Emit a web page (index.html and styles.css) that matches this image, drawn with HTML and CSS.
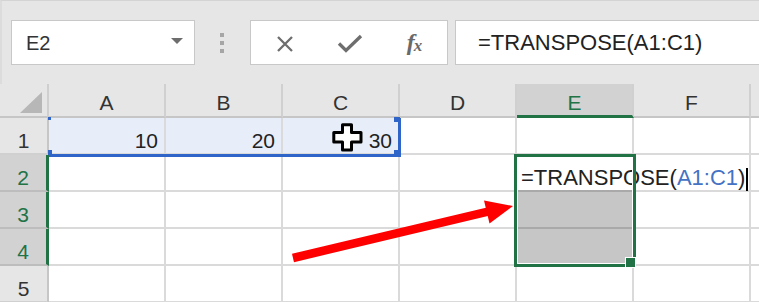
FILE: index.html
```html
<!DOCTYPE html>
<html lang="en">
<head>
  <meta charset="UTF-8">
  <title>TRANSPOSE</title>
  <link rel="stylesheet" href="styles.css">
</head>
<body>
  <div class="toolbar">
    <div class="name-box"><span>E2</span><i class="drop"></i></div>
    <div class="dots"><span></span><span></span><span></span></div>
    <div class="fx-buttons">
      <div class="btn">
        <svg width="18" height="18" viewBox="0 0 18 18"><path d="M2 2L16 16M16 2L2 16" stroke="#6e6e6e" stroke-width="2.3" fill="none"/></svg>
      </div>
      <div class="btn">
        <svg width="26" height="19" viewBox="0 0 26 19"><path d="M2 9.5L9 16.5L24 2" stroke="#6e6e6e" stroke-width="3.3" fill="none"/></svg>
      </div>
      <div class="btn fx"><span class="f">f</span><span class="x">x</span></div>
    </div>
    <div class="formula">=TRANSPOSE(A1:C1)</div>
  </div>

  <div class="sheet-wrap">
    <div class="sheet">
      <div class="corner"><div class="tri"></div></div>
      <div class="col-head">A</div>
      <div class="col-head">B</div>
      <div class="col-head">C</div>
      <div class="col-head">D</div>
      <div class="col-head active">E</div>
      <div class="col-head">F</div>
      <div class="col-head"></div>

      <div class="row-head">1</div>
      <div class="cell ref">10</div>
      <div class="cell ref">20</div>
      <div class="cell ref">30</div>
      <div class="cell"></div>
      <div class="cell"></div>
      <div class="cell"></div>
      <div class="cell"></div>

      <div class="row-head active">2</div>
      <div class="cell"></div>
      <div class="cell"></div>
      <div class="cell"></div>
      <div class="cell"></div>
      <div class="cell top-sel"></div>
      <div class="cell"></div>
      <div class="cell"></div>

      <div class="row-head active">3</div>
      <div class="cell"></div>
      <div class="cell"></div>
      <div class="cell"></div>
      <div class="cell"></div>
      <div class="cell sel mid"></div>
      <div class="cell"></div>
      <div class="cell"></div>

      <div class="row-head active">4</div>
      <div class="cell"></div>
      <div class="cell"></div>
      <div class="cell"></div>
      <div class="cell"></div>
      <div class="cell sel"></div>
      <div class="cell"></div>
      <div class="cell"></div>

      <div class="row-head">5</div>
      <div class="cell"></div>
      <div class="cell"></div>
      <div class="cell"></div>
      <div class="cell"></div>
      <div class="cell"></div>
      <div class="cell"></div>
      <div class="cell"></div>
    </div>

    <!-- marks drawn over the grid: reference box, selection, in-cell editor -->
    <div class="marks">
      <div class="ref-box">
        <i class="h h-tl"></i><i class="h h-bl"></i><i class="h h-tr"></i><i class="h h-br"></i>
      </div>
      <div class="sel-box"><i class="fill-handle"></i></div>
      <div class="editor">=TRANSPOSE(<span class="arg">A1:C1</span>)<i class="caret"></i></div>
    </div>
  </div>

  <svg class="pointer" width="31" height="29" viewBox="0 0 31 29">
    <path d="M10.5 1.8H19.5V9.5H29V19H19.5V27H10.5V19H1.8V9.5H10.5Z" fill="#fff" stroke="#000" stroke-width="3" stroke-linejoin="round"/>
  </svg>

  <svg class="arrow" width="759" height="302" viewBox="0 0 759 302">
    <line x1="293" y1="258" x2="490" y2="211.2" stroke="#ff0000" stroke-width="8.5"/>
    <polygon points="513,206 484,200.5 489.5,223.5" fill="#ff0000"/>
  </svg>
</body>
</html>
```

FILE: styles.css
```css
* { box-sizing: border-box; }

html, body {
  margin: 0;
  padding: 0;
}

body {
  position: relative;
  width: 759px;
  height: 302px;
  overflow: hidden;
  background: #fff;
  font-family: 'Liberation Sans', Arial, sans-serif;
  color: #222;
}

/* formula bar */
.toolbar {
  display: flex;
  align-items: flex-start;
  height: 84px;
  padding: 19px 0 0 9px;
  background: #e6e6e6;
  border-top: 1px solid #d4d4d4;
  border-left: 2px solid #dcdcdc;
  overflow: hidden;
}

.name-box {
  display: flex;
  align-items: center;
  justify-content: space-between;
  width: 184px;
  height: 45px;
  padding: 2px 11px 0 14px;
  background: #fff;
  border: 1px solid #c8c8c8;
  font-size: 20px;
  color: #333;
}

.drop {
  width: 0;
  height: 0;
  border-left: 6.5px solid transparent;
  border-right: 6.5px solid transparent;
  border-top: 6px solid #6d6d6d;
  margin-top: -6px;
}

.dots {
  display: flex;
  flex-direction: column;
  gap: 4px;
  margin: 13px 0 0 25px;
}

.dots span {
  width: 4px;
  height: 4px;
  background: #a6a6a6;
}

.fx-buttons {
  display: flex;
  align-items: center;
  width: 198px;
  height: 45px;
  margin-left: 26px;
  padding-left: 1px;
  background: #fff;
  border: 1px solid #c8c8c8;
}

.btn {
  display: flex;
  align-items: center;
  justify-content: center;
  width: 65px;
  height: 100%;
  padding-top: 2px;
}

.btn.fx {
  font-family: 'Liberation Serif', 'Times New Roman', serif;
  font-style: italic;
  color: #6a6a6a;
  padding-top: 0;
}

.fx .f {
  font-size: 24px;
  font-weight: bold;
}

.fx .x {
  font-size: 17px;
  font-weight: bold;
  margin: 6px 0 0 -1px;
}

.formula {
  flex: 1;
  height: 45px;
  margin: 0 -10px 0 7px;
  padding: 7px 0 0 22px;
  background: #fff;
  border: 1px solid #c8c8c8;
  font-size: 22px;
  line-height: 30px;
  color: #222;
  white-space: nowrap;
}

/* sheet grid */
.sheet-wrap {
  position: relative;
}

.sheet,
.marks {
  display: grid;
  grid-template-columns: 49px repeat(6, 117px) 1fr;
  grid-template-rows: 34px repeat(5, 37px);
}

.corner {
  display: flex;
  justify-content: flex-end;
  align-items: flex-end;
  padding: 0 5px 3px 0;
  background: #e6e6e6;
  border-right: 2px solid #cfcfcf;
  border-bottom: 2px solid #c6c6c6;
}

.tri {
  width: 22px;
  height: 21px;
  background: #b7b7b7;
  clip-path: polygon(100% 0, 100% 100%, 0 100%);
}

.col-head {
  padding-top: 4px;
  background: #e6e6e6;
  border-right: 2px solid #d0d0d0;
  border-bottom: 2px solid #c6c6c6;
  font-size: 21px;
  line-height: 30px;
  text-align: center;
  color: #333;
}

.col-head.active {
  background: #d2d2d2;
  border-bottom: 3px solid #217346;
  color: #217346;
}

.row-head {
  padding-top: 8px;
  background: #e6e6e6;
  border-right: 2px solid #c6c6c6;
  border-bottom: 2px solid #d0d0d0;
  font-size: 21px;
  line-height: 29px;
  text-align: center;
  color: #333;
}

.row-head.active {
  background: #d2d2d2;
  border-right: 3px solid #217346;
  border-bottom-color: #bdbdbd;
  color: #217346;
}

.cell {
  padding: 8px 6px 0;
  border-right: 2px solid #dadada;
  border-bottom: 2px solid #dadada;
  font-size: 21px;
  line-height: 29px;
  text-align: right;
  white-space: nowrap;
  color: #222;
}

.cell.ref {
  background: #e8eef9;
}

.cell.top-sel {
  border-bottom-color: #a9a9a9;
}

.cell.sel {
  background: #c6c6c6;
}

.cell.sel.mid {
  border-bottom-color: #a9a9a9;
}

/* overlays on the grid */
.marks {
  position: absolute;
  top: 0;
  left: 0;
  right: 0;
  bottom: 0;
  pointer-events: none;
}

.ref-box {
  position: relative;
  grid-column: 2 / 5;
  grid-row: 2;
  margin: 0 -1px -2px 0;
  border-right: 3px solid #2f64c8;
  border-bottom: 3px solid #2f64c8;
}

.h {
  position: absolute;
  background: #2f64c8;
}

.h-tl { left: -1px; top: -1px; width: 3px; height: 3px; }
.h-bl { left: -1px; bottom: -1px; width: 4px; height: 5px; }
.h-tr { right: -2px; top: -1px; width: 6px; height: 5px; }
.h-br { right: -3px; bottom: -3px; width: 7px; height: 7px; }

.sel-box {
  position: relative;
  grid-column: 6;
  grid-row: 3 / 6;
  margin: -1px -2px -1px -3px;
  border: 3px solid #217346;
  box-shadow: inset 0 0 0 1px #fff;
}

.fill-handle {
  position: absolute;
  right: -3px;
  bottom: -4px;
  width: 11px;
  height: 11px;
  background: #217346;
  border: 1px solid #fff;
}

.editor {
  grid-column: 6 / 8;
  grid-row: 3;
  margin: 2px 2px 2px 0;
  padding: 8px 0 0 4px;
  background: #fff;
  font-size: 22px;
  line-height: 26px;
  white-space: nowrap;
  color: #222;
  overflow: visible;
}

.editor .arg {
  color: #4472c4;
}

.caret {
  display: inline-block;
  width: 2px;
  height: 23px;
  margin-left: 1px;
  vertical-align: -6px;
  background: #000;
}

.pointer {
  position: absolute;
  left: 332px;
  top: 123px;
}

.arrow {
  position: absolute;
  left: 0;
  top: 0;
  pointer-events: none;
}
```
